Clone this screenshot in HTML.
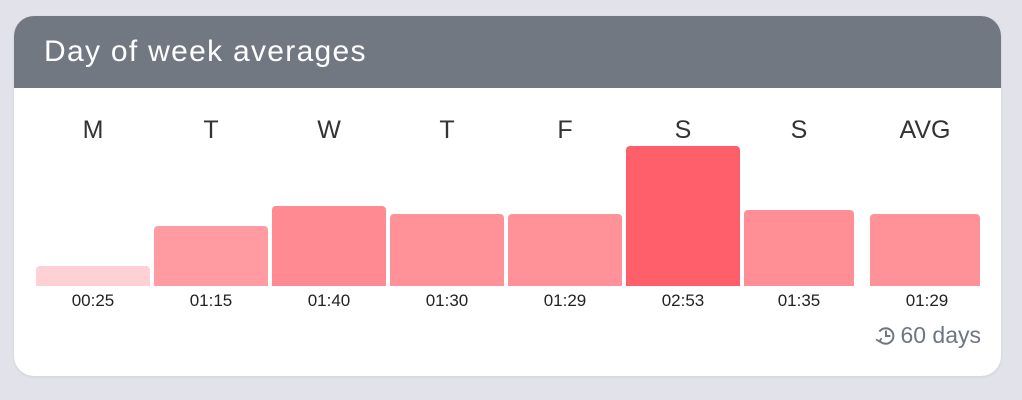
<!DOCTYPE html><html><head><style>
body{margin:0;width:1022px;height:400px;background:#e2e2eb;font-family:"Liberation Sans",sans-serif;position:relative;overflow:hidden}
.card{position:absolute;left:14px;top:16px;width:987px;height:360px;background:#fff;border-radius:20px;overflow:hidden;box-shadow:0 1px 3px rgba(0,0,0,.08)}
.hd{height:72px;background:#717882;color:#fff;font-size:30px;line-height:72px;padding-left:30px;letter-spacing:1.3px}
.b{position:absolute;bottom:90px;border-radius:4px 4px 0 0}
.d{position:absolute;top:100px;font-size:25px;color:#333;text-align:center;width:114px}
.v{position:absolute;top:275px;font-size:17px;color:#222;text-align:center;width:114px}
</style></head><body><div class="card"><div class="hd">Day of week averages</div>
<div class="d" style="left:22px">M</div><div class="d" style="left:140px">T</div><div class="d" style="left:258px">W</div><div class="d" style="left:376px">T</div><div class="d" style="left:494px">F</div><div class="d" style="left:612px">S</div><div class="d" style="left:728px">S</div><div class="d" style="left:854px">AVG</div>
<div class="b" style="left:22px;width:114px;height:20px;background:#ffd0d4"></div>
<div class="b" style="left:140px;width:114px;height:60px;background:#ff9ba1"></div>
<div class="b" style="left:258px;width:114px;height:80px;background:#ff8a91"></div>
<div class="b" style="left:376px;width:114px;height:72px;background:#ff9298"></div>
<div class="b" style="left:494px;width:114px;height:72px;background:#ff9298"></div>
<div class="b" style="left:612px;width:114px;height:140px;background:#ff5f6b"></div>
<div class="b" style="left:730px;width:110px;height:76px;background:#ff8e95"></div>
<div class="b" style="left:856px;width:110px;height:72px;background:#ff9298"></div>
<div class="v" style="left:22px">00:25</div><div class="v" style="left:140px">01:15</div><div class="v" style="left:258px">01:40</div><div class="v" style="left:376px">01:30</div><div class="v" style="left:494px">01:29</div><div class="v" style="left:612px">02:53</div><div class="v" style="left:728px">01:35</div><div class="v" style="left:856px">01:29</div>
<div style="position:absolute;right:20px;top:306px;font-size:23px;color:#6f7680;display:flex;align-items:center"><svg width="22" height="22" viewBox="0 0 20 20" style="margin-right:3px"><path d="M4 14A7 7 0 1 0 4 6" fill="none" stroke="#6f7680" stroke-width="1.8"/><path d="M10 5v5h4" fill="none" stroke="#6f7680" stroke-width="1.8"/><path d="M1 13l3 2 2-3" fill="none" stroke="#6f7680" stroke-width="1.6"/></svg>60 days</div>
</div></body></html>
